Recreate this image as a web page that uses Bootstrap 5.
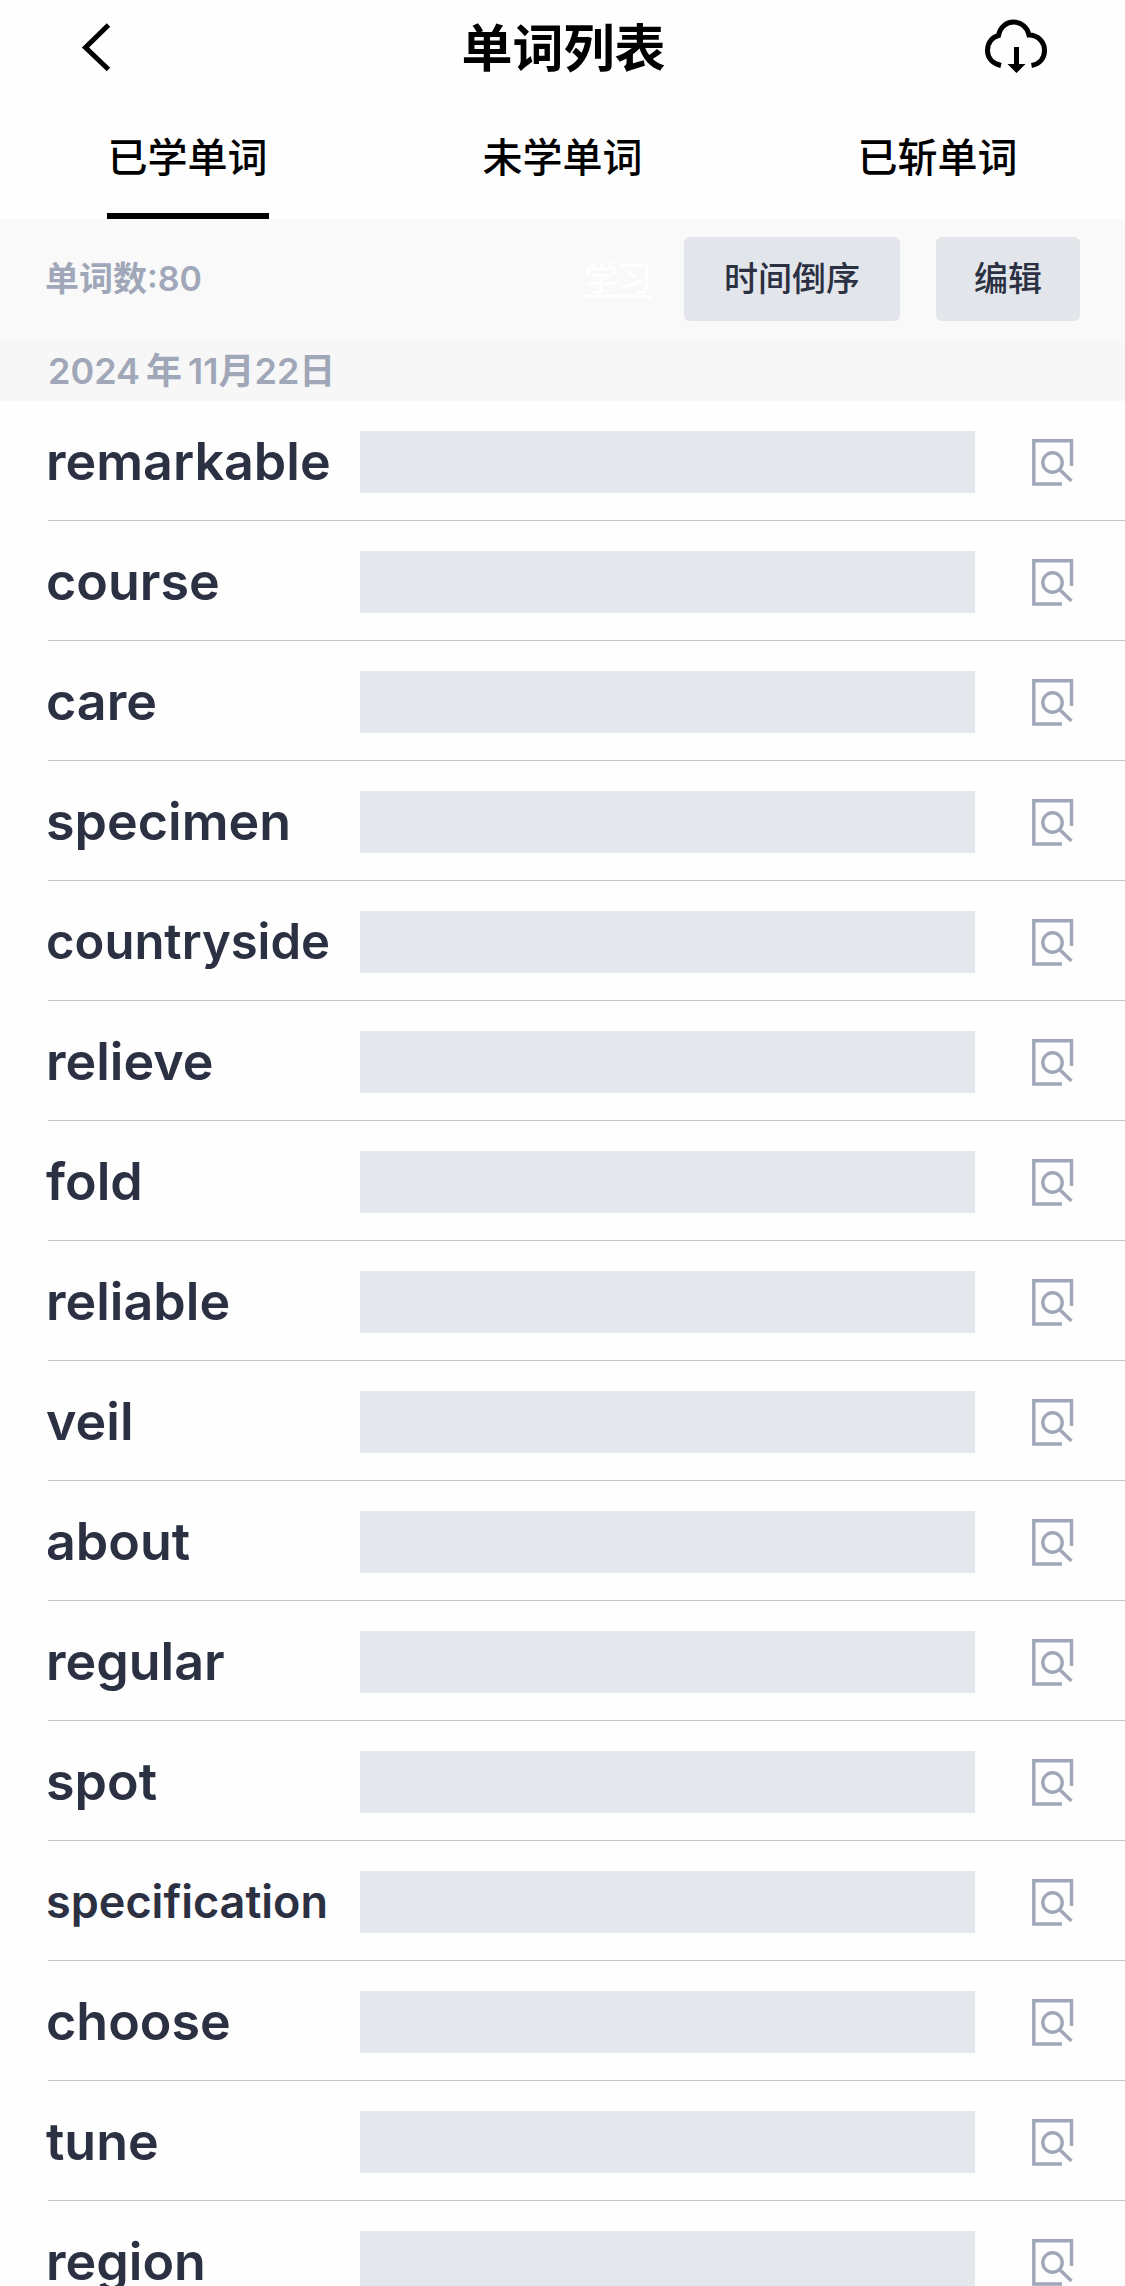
<!DOCTYPE html>
<html lang="zh-CN">
<head>
<meta charset="utf-8">
<meta name="viewport" content="width=device-width, initial-scale=1">
<title>单词列表</title>
<link href="https://cdn.jsdelivr.net/npm/bootstrap@5.3.0/dist/css/bootstrap.min.css" rel="stylesheet">
<style>
  body { font-family: Inter, "Noto Sans CJK SC", sans-serif; color: #2b3042; background: #fefefe; }
  .app-head { height: 98px; padding: 0 76px 0 78px; color: #000; }
  .app-head h1 { font-size: 51px; line-height: 60px; font-weight: 600; }
  .icon-btn { width: 66px; height: 66px; color: inherit; background: none; border: 0; padding: 0; }
  .icon-btn svg { display: block; }
  .tab-bar { height: 121px; }
  .tab-bar .nav-link { height: 121px; padding: 36px 0 0; color: #000; font-size: 40px; line-height: 48px; font-weight: 500; border-radius: 0; display: flex; flex-direction: column; align-items: center; justify-content: space-between; }
  .tab-bar .nav-link::after { content: ""; width: 162px; height: 6px; }
  .tab-bar .nav-link.active::after { background: #000; }
  .tool-bar { height: 120px; padding: 0 45px; background: #f9f9f9; font-size: 34px; line-height: 48px; font-weight: 500; }
  .muted-ink { color: #a0a7b8; font-weight: 600; }
  .study-link { color: #fff; margin-right: 32px; text-underline-offset: 4px; }
  .study-link:hover { color: #fff; }
  .btn-soft { --bs-btn-bg: #e2e5ea; --bs-btn-color: #2b3042; --bs-btn-hover-bg: #d8dce3; --bs-btn-border-width: 0; --bs-btn-border-radius: 6px; --bs-btn-font-size: 34px; --bs-btn-font-weight: 500; --bs-btn-line-height: 48px; height: 84px; padding: 0 38px; }
  .btn-wide { padding: 0 40px; margin-right: 36px; }
  .date-bar { height: 62px; padding: 2px 48px 0; background: #f7f7f7; font-size: 36px; line-height: 60px; }
  .date-unit { margin: 0 6px; }
  .word-list { overflow-y: auto; scrollbar-width: none; padding-left: 48px; }
  .word-row { height: 120px; border-bottom: 1px solid #c3c7ca; padding: 3px 49px 0 0; }
  .word-text { width: 312px; margin-left: -2px; margin-right: 2px; font-size: 52px; line-height: 60px; font-weight: 600; }
  .word-text.mid { font-size: 49px; }
  .word-text.compact { font-size: 45px; }
  .meaning-mask { height: 62px; background: #e4e7eb; margin-right: 56px; }
  .look-btn { width: 45px; height: 49px; padding: 0; border: 0; background: none; color: #a0a7b8; }
  .look-btn svg { display: block; }
</style>
<script src="https://cdn.jsdelivr.net/npm/bootstrap@5.3.0/dist/js/bootstrap.bundle.min.js"></script>
</head>
<body>
<svg class="d-none" aria-hidden="true">
  <symbol id="look" viewBox="0 0 45 49">
    <g fill="none" stroke="currentColor" stroke-width="3.400">
      <path d="M40.500 28V2.800H2.800V46H31"/>
      <circle cx="21.500" cy="24.500" r="9.700"/>
      <path d="M28.500 31.500L40.500 43"/>
    </g>
  </symbol>
</svg>
<div class="vh-100 d-flex flex-column overflow-hidden">
  <header class="app-head d-flex align-items-center justify-content-between flex-shrink-0">
    <button type="button" class="icon-btn" aria-label="返回">
      <svg width="66" height="66" viewBox="0 0 66 66" fill="none" stroke="currentColor" stroke-width="5"><path d="M30.500 9L7.500 31.500L30.500 53.500"/></svg>
    </button>
    <h1 class="mb-0">单词列表</h1>
    <button type="button" class="icon-btn" aria-label="下载">
      <svg width="66" height="66" viewBox="0 0 66 66" fill="none"><path d="M18 49.500C9.500 47.500 4.500 42 4.500 34.500C4.500 26.500 9.500 21 15.500 19.500C17 11 23.500 6 30.500 6C38 6 44.500 11.500 46 19C55.500 19 61.500 26.500 61.500 34.500C61.500 42 57 48 48.500 49.500" stroke="currentColor" stroke-width="5"/><path d="M31 31h5v17h6.500L33.500 57L24.500 48H31z" fill="currentColor"/></svg>
    </button>
  </header>
  <nav class="tab-bar nav nav-fill flex-nowrap flex-shrink-0" aria-label="单词分类">
    <a class="nav-link nav-item active" href="#learned" aria-current="page">已学单词</a>
    <a class="nav-link nav-item" href="#unlearned">未学单词</a>
    <a class="nav-link nav-item" href="#mastered">已斩单词</a>
  </nav>
  <div class="tool-bar d-flex align-items-center flex-shrink-0">
    <span class="muted-ink me-auto">单词数:80</span>
    <a class="study-link" href="#study">学习</a>
    <button type="button" class="btn btn-soft btn-wide">时间倒序</button>
    <button type="button" class="btn btn-soft">编辑</button>
  </div>
  <div class="date-bar muted-ink flex-shrink-0">2024<span class="date-unit">年</span>11月22日</div>
  <ul class="word-list list-unstyled mb-0 flex-grow-1">
    <li class="word-row d-flex align-items-center"><span class="word-text">remarkable</span><div class="meaning-mask flex-grow-1"></div><button type="button" class="look-btn" aria-label="查看 remarkable"><svg width="45" height="49"><use href="#look"/></svg></button></li>
    <li class="word-row d-flex align-items-center"><span class="word-text">course</span><div class="meaning-mask flex-grow-1"></div><button type="button" class="look-btn" aria-label="查看 course"><svg width="45" height="49"><use href="#look"/></svg></button></li>
    <li class="word-row d-flex align-items-center"><span class="word-text">care</span><div class="meaning-mask flex-grow-1"></div><button type="button" class="look-btn" aria-label="查看 care"><svg width="45" height="49"><use href="#look"/></svg></button></li>
    <li class="word-row d-flex align-items-center"><span class="word-text">specimen</span><div class="meaning-mask flex-grow-1"></div><button type="button" class="look-btn" aria-label="查看 specimen"><svg width="45" height="49"><use href="#look"/></svg></button></li>
    <li class="word-row d-flex align-items-center"><span class="word-text mid">countryside</span><div class="meaning-mask flex-grow-1"></div><button type="button" class="look-btn" aria-label="查看 countryside"><svg width="45" height="49"><use href="#look"/></svg></button></li>
    <li class="word-row d-flex align-items-center"><span class="word-text">relieve</span><div class="meaning-mask flex-grow-1"></div><button type="button" class="look-btn" aria-label="查看 relieve"><svg width="45" height="49"><use href="#look"/></svg></button></li>
    <li class="word-row d-flex align-items-center"><span class="word-text">fold</span><div class="meaning-mask flex-grow-1"></div><button type="button" class="look-btn" aria-label="查看 fold"><svg width="45" height="49"><use href="#look"/></svg></button></li>
    <li class="word-row d-flex align-items-center"><span class="word-text">reliable</span><div class="meaning-mask flex-grow-1"></div><button type="button" class="look-btn" aria-label="查看 reliable"><svg width="45" height="49"><use href="#look"/></svg></button></li>
    <li class="word-row d-flex align-items-center"><span class="word-text">veil</span><div class="meaning-mask flex-grow-1"></div><button type="button" class="look-btn" aria-label="查看 veil"><svg width="45" height="49"><use href="#look"/></svg></button></li>
    <li class="word-row d-flex align-items-center"><span class="word-text">about</span><div class="meaning-mask flex-grow-1"></div><button type="button" class="look-btn" aria-label="查看 about"><svg width="45" height="49"><use href="#look"/></svg></button></li>
    <li class="word-row d-flex align-items-center"><span class="word-text">regular</span><div class="meaning-mask flex-grow-1"></div><button type="button" class="look-btn" aria-label="查看 regular"><svg width="45" height="49"><use href="#look"/></svg></button></li>
    <li class="word-row d-flex align-items-center"><span class="word-text">spot</span><div class="meaning-mask flex-grow-1"></div><button type="button" class="look-btn" aria-label="查看 spot"><svg width="45" height="49"><use href="#look"/></svg></button></li>
    <li class="word-row d-flex align-items-center"><span class="word-text compact">specification</span><div class="meaning-mask flex-grow-1"></div><button type="button" class="look-btn" aria-label="查看 specification"><svg width="45" height="49"><use href="#look"/></svg></button></li>
    <li class="word-row d-flex align-items-center"><span class="word-text">choose</span><div class="meaning-mask flex-grow-1"></div><button type="button" class="look-btn" aria-label="查看 choose"><svg width="45" height="49"><use href="#look"/></svg></button></li>
    <li class="word-row d-flex align-items-center"><span class="word-text">tune</span><div class="meaning-mask flex-grow-1"></div><button type="button" class="look-btn" aria-label="查看 tune"><svg width="45" height="49"><use href="#look"/></svg></button></li>
    <li class="word-row d-flex align-items-center"><span class="word-text">region</span><div class="meaning-mask flex-grow-1"></div><button type="button" class="look-btn" aria-label="查看 region"><svg width="45" height="49"><use href="#look"/></svg></button></li>
  </ul>
</div>
</body>
</html>
